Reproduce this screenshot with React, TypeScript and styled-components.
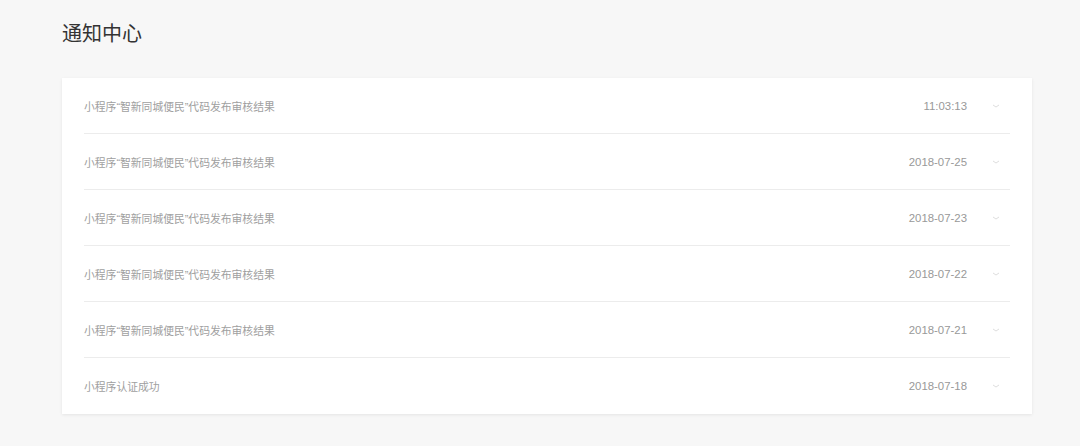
import React from "react";
import styled, { createGlobalStyle } from "styled-components";

interface NoticeType {
  id: number;
  title: string;
  time: string;
}

const notices: NoticeType[] = [
  { id: 1, title: "小程序“智新同城便民”代码发布审核结果", time: "11:03:13" },
  { id: 2, title: "小程序“智新同城便民”代码发布审核结果", time: "2018-07-25" },
  { id: 3, title: "小程序“智新同城便民”代码发布审核结果", time: "2018-07-23" },
  { id: 4, title: "小程序“智新同城便民”代码发布审核结果", time: "2018-07-22" },
  { id: 5, title: "小程序“智新同城便民”代码发布审核结果", time: "2018-07-21" },
  { id: 6, title: "小程序认证成功", time: "2018-07-18" },
];

const GlobalStyle = createGlobalStyle`
  html, body {
    margin: 0;
    padding: 0;
    background: #f7f7f7;
    font-family: "Liberation Sans", "Noto Sans CJK SC", sans-serif;
  }
`;

const Page = styled.div`
  width: 1080px;
  height: 446px;
  padding: 19px 48px 0 62px;
  box-sizing: border-box;
`;

const Title = styled.h1`
  margin: 0 0 29px;
  font-size: 20px;
  line-height: 30px;
  font-weight: 400;
  color: #333;
`;

const Card = styled.ul`
  list-style: none;
  margin: 0;
  padding: 0 22px;
  background: #fff;
  box-shadow: 0 1px 3px rgba(0, 0, 0, 0.08);
`;

const Row = styled.li`
  display: flex;
  align-items: center;
  height: 56px;
  border-bottom: 1px solid #ececec;
  box-sizing: border-box;

  &:last-child {
    border-bottom: none;
  }
`;

const RowTitle = styled.span`
  flex: 1;
  font-size: 10.8px;
  color: #a0a0a0;
`;

const RowTime = styled.span`
  font-size: 11.4px;
  color: #999;
`;

const Arrow = styled.svg`
  width: 8px;
  height: 6px;
  margin: 0 10px 0 25px;
  color: #dedede;
`;

const App: React.FC = () => (
  <>
    <GlobalStyle />
    <Page>
      <Title>通知中心</Title>
      <Card>
        {notices.map((notice) => (
          <Row key={notice.id}>
            <RowTitle>{notice.title}</RowTitle>
            <RowTime>{notice.time}</RowTime>
            <Arrow viewBox="0 0 8 6">
              <path d="M1 2l3 2 3-2" fill="none" stroke="currentColor" strokeWidth="1" />
            </Arrow>
          </Row>
        ))}
      </Card>
    </Page>
  </>
);

export default App;
